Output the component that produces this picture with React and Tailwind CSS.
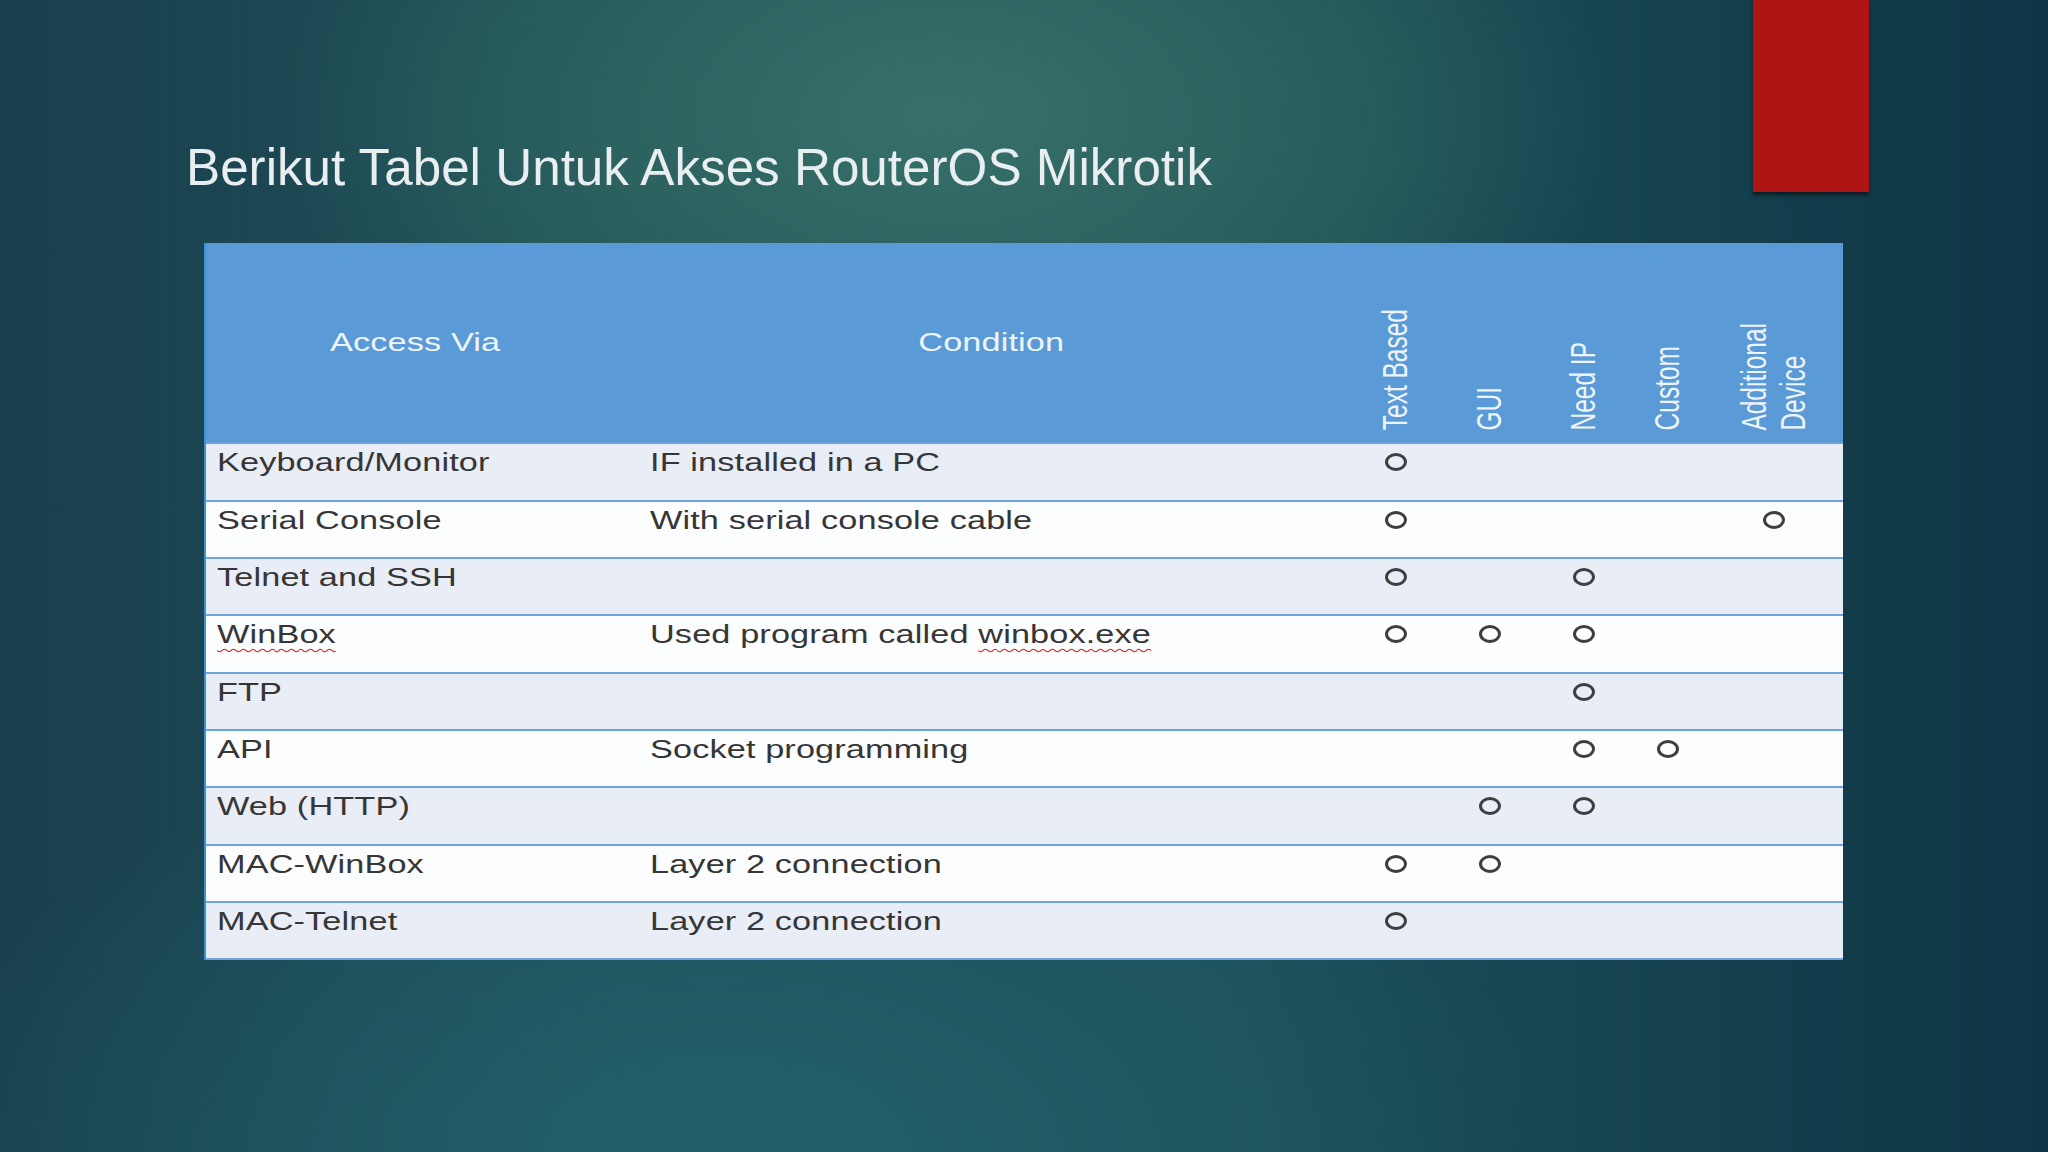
import React from "react";

const rows = [
  { a: "Keyboard/Monitor", c: "IF installed in a PC", m: [1, 0, 0, 0, 0] },
  { a: "Serial Console", c: "With serial console cable", m: [1, 0, 0, 0, 1] },
  { a: "Telnet and SSH", c: "", m: [1, 0, 1, 0, 0] },
  { a: "WinBox", c: "Used program called ", u: "winbox.exe", m: [1, 1, 1, 0, 0], au: true },
  { a: "FTP", c: "", m: [0, 0, 1, 0, 0] },
  { a: "API", c: "Socket programming", m: [0, 0, 1, 1, 0] },
  { a: "Web (HTTP)", c: "", m: [0, 1, 1, 0, 0] },
  { a: "MAC-WinBox", c: "Layer 2 connection", m: [1, 1, 0, 0, 0] },
  { a: "MAC-Telnet", c: "Layer 2 connection", m: [1, 0, 0, 0, 0] },
];

const markCols = ["w-[94px]", "w-[94px]", "w-[94px]", "w-[74px]", "flex-1"];

function Stretch({ children, center }) {
  return (
    <span
      className={
        "inline-block whitespace-pre scale-x-[1.37] tracking-[0.1px] " +
        (center ? "origin-center" : "origin-left")
      }
    >
      {children}
    </span>
  );
}

function Circle() {
  return <span className="block w-[22px] h-[18px] rounded-[50%] border-[3px] border-[#3e3e3e]" />;
}

function VLabel({ children }) {
  return (
    <span className="inline-block [writing-mode:vertical-rl] rotate-180 scale-x-[1.4] text-[24.5px] leading-[1.15] text-[#eef4fb] whitespace-pre">
      {children}
    </span>
  );
}

export default function App() {
  return (
    <div
      className="relative w-[2048px] h-[1152px] overflow-hidden bg-[radial-gradient(ellipse_900px_520px_at_46%_10%,#37706b_0%,#2c625f_35%,rgba(36,88,92,0)_75%),radial-gradient(ellipse_1200px_600px_at_35%_100%,#21606a_0%,rgba(33,96,102,0)_70%),linear-gradient(90deg,#193f4d_0%,#1f5059_30%,#1d5059_60%,#143f4d_85%,#0f3646_100%)]"
      style={{ fontFamily: '"Liberation Sans", Arial, sans-serif' }}
    >
      <div className="absolute left-[1753px] top-0 w-[116px] h-[192px] bg-[#ae1616] shadow-[0_3px_4px_rgba(0,0,0,0.55)]" />

      <div className="pt-[142px] pl-[186px]">
        <h1 className="text-[51.2px] leading-none font-normal text-[#e9eff1]">
          Berikut Tabel Untuk Akses RouterOS Mikrotik
        </h1>
      </div>

      <div className="mt-[50px] ml-[204px] w-[1639px] border-l-2 border-[#3a93d6]">
        {/* header */}
        <div className="flex h-[199px] bg-[#5a9ad6] text-[#eef4fb] text-[25px] leading-none">
          <div className="w-[434px] flex items-center justify-center pr-[16px]">
            <Stretch center>Access Via</Stretch>
          </div>
          <div className="w-[709px] flex items-center justify-center pr-[6px]">
            <Stretch center>Condition</Stretch>
          </div>
          <div className="w-[94px] flex items-end justify-center pb-[12px]">
            <VLabel>Text Based</VLabel>
          </div>
          <div className="w-[94px] flex items-end justify-center pb-[12px]">
            <VLabel>GUI</VLabel>
          </div>
          <div className="w-[94px] flex items-end justify-center pb-[12px]">
            <VLabel>Need IP</VLabel>
          </div>
          <div className="w-[74px] flex items-end justify-center pb-[12px]">
            <VLabel>Custom</VLabel>
          </div>
          <div className="flex-1 flex items-end justify-center pb-[12px]">
            <VLabel>{"Additional\nDevice"}</VLabel>
          </div>
        </div>

        {/* rows */}
        <div className="border-b-2 border-[#6ea3db]">
          {rows.map((r, i) => (
            <div
              key={i}
              className={
                "flex h-[57.33px] border-t-2 border-[#6ea3db] text-[25px] leading-none text-[#363636] " +
                (i % 2 === 0 ? "bg-[#e9edf6]" : "bg-[#fcfdff]")
              }
            >
              <div className="w-[434px] pl-[11px] pt-[6px]">
                <Stretch>
                  {r.au ? (
                    <span className="underline decoration-wavy decoration-[#e02020] decoration-1 underline-offset-[5px]">
                      {r.a}
                    </span>
                  ) : (
                    r.a
                  )}
                </Stretch>
              </div>
              <div className="w-[709px] pl-[10px] pt-[6px]">
                <Stretch>
                  {r.c}
                  {r.u ? (
                    <span className="underline decoration-wavy decoration-[#e02020] decoration-1 underline-offset-[5px]">
                      {r.u}
                    </span>
                  ) : null}
                </Stretch>
              </div>
              {r.m.map((v, j) => (
                <div key={j} className={markCols[j] + " flex justify-center pt-[9px]"}>
                  {v ? <Circle /> : null}
                </div>
              ))}
            </div>
          ))}
        </div>
      </div>
    </div>
  );
}
